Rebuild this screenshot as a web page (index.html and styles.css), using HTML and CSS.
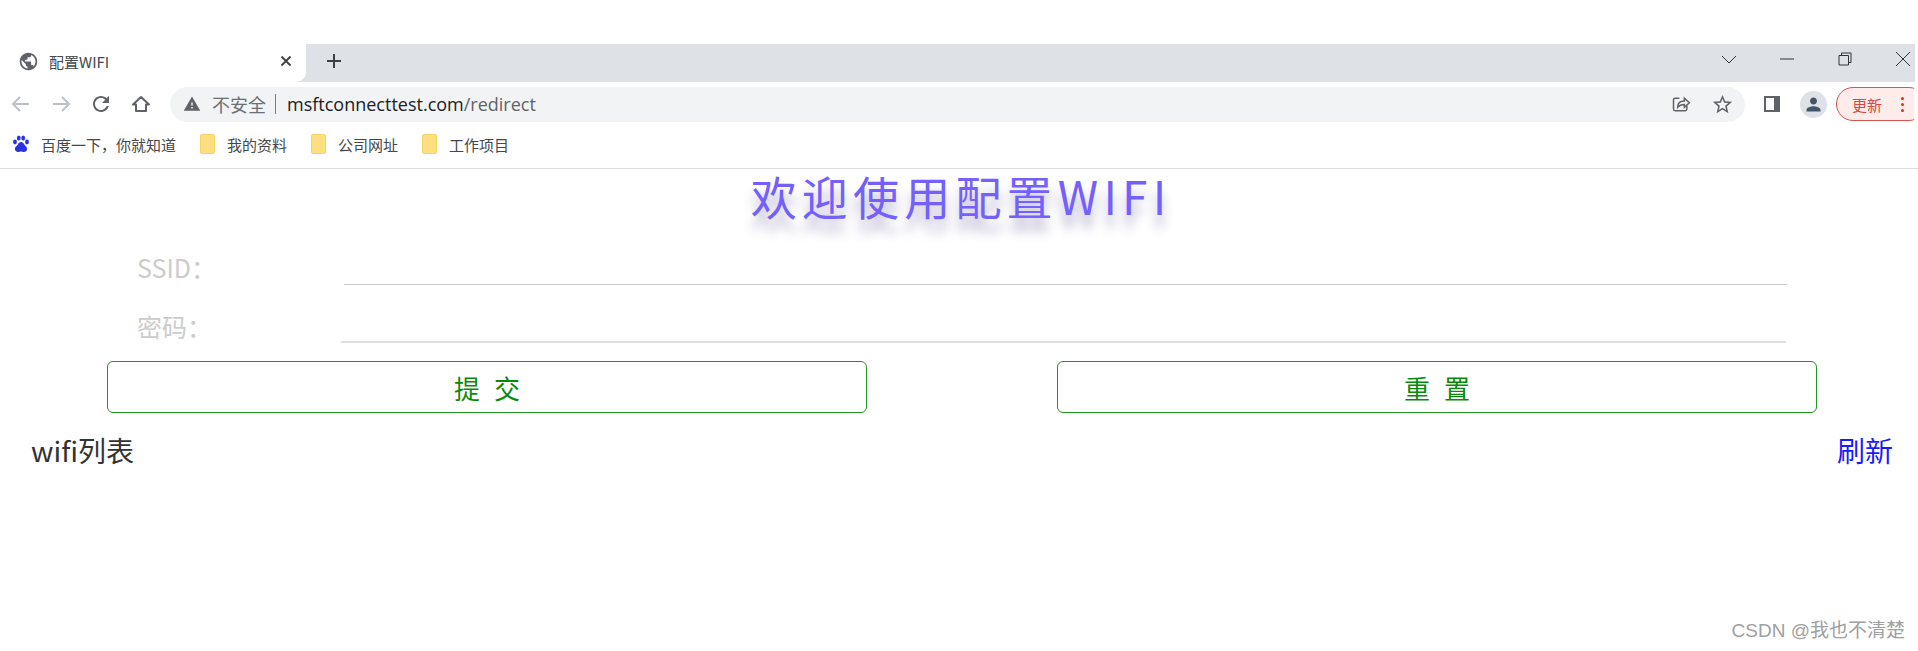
FILE: index.html
```html
<!DOCTYPE html>
<html lang="zh-CN">
<head>
    <meta charset="UTF-8">
    <meta name="viewport" content="width=device-width, initial-scale=1.0">
    <title>配置WIFI</title>
    <link rel="stylesheet" href="styles.css">
</head>
<body>
    <div class="browser">
        <div class="tab-strip">
            <div class="tab">
                <svg class="favicon" viewBox="0 0 24 24"><path d="M12 2C6.48 2 2 6.48 2 12s4.48 10 10 10 10-4.48 10-10S17.52 2 12 2zm-1 17.93c-3.95-.49-7-3.85-7-7.93 0-.62.08-1.21.21-1.79L9 15v1c0 1.1.9 2 2 2v1.93zm6.9-2.54c-.26-.81-1-1.39-1.9-1.39h-1v-3c0-.55-.45-1-1-1H8v-2h2c.55 0 1-.45 1-1V7h2c1.1 0 2-.9 2-2v-.41c2.93 1.19 5 4.06 5 7.41 0 2.08-.8 3.97-2.1 5.39z"/></svg>
                <span class="tab-title">配置WIFI</span>
                <svg class="tab-close" viewBox="0 0 12 12"><path d="M1.5 1.5l9 9M10.5 1.5l-9 9"/></svg>
            </div>
            <svg class="new-tab" viewBox="0 0 16 16"><path d="M8 1v14M1 8h14"/></svg>
            <div class="window-buttons">
                <svg class="win-icon" viewBox="0 0 14 14"><path d="M0 4l7 7 7-7"/></svg>
                <svg class="win-icon" viewBox="0 0 14 14"><path d="M0 7h14"/></svg>
                <svg class="win-icon" viewBox="0 0 14 14"><path d="M1 3.5h9.5V13H1zM3.5 3.5V1H13v9.5h-2.5"/></svg>
                <svg class="win-icon" viewBox="0 0 14 14"><path d="M0 0l14 14M14 0L0 14"/></svg>
            </div>
        </div>

        <div class="toolbar">
            <div class="nav-buttons">
                <svg class="nav-icon disabled" viewBox="0 0 24 24"><path d="M20 12H5M11 5l-7 7 7 7"/></svg>
                <svg class="nav-icon disabled" viewBox="0 0 24 24"><path d="M4 12h15M13 5l7 7-7 7"/></svg>
                <svg class="nav-fill" viewBox="0 0 24 24"><path d="M17.65 6.35C16.2 4.9 14.21 4 12 4c-4.42 0-7.99 3.58-7.99 8s3.57 8 7.99 8c3.73 0 6.84-2.55 7.73-6h-2.08c-.82 2.33-3.04 4-5.65 4-3.31 0-6-2.69-6-6s2.69-6 6-6c1.66 0 3.14.69 4.22 1.78L13 11h7V4l-2.35 2.35z"/></svg>
                <svg class="nav-icon home" viewBox="0 0 24 24"><path d="M12 5l-8 7.500h3V19h10v-6.500h3z"/></svg>
            </div>
            <div class="omnibox">
                <svg class="warn-icon" viewBox="0 0 24 24"><path d="M1 21h22L12 2 1 21zm12-3h-2v-2h2v2zm0-4h-2v-4h2v4z"/></svg>
                <span class="not-secure">不安全</span>
                <span class="sep"></span>
                <span class="url">msftconnecttest.com<span class="url-path">/redirect</span></span>
                <svg class="omni-icon share" viewBox="0 0 24 24"><path d="M10 5H5a2 2 0 0 0-2 2v11a2 2 0 0 0 2 2h12a2 2 0 0 0 2-2v-4M8 16c0-5 3-7.500 8-7.500V5l6 5.500-6 5.500v-3.500c-3 0-6 1-8 3.500z"/></svg>
                <svg class="omni-star" viewBox="0 0 24 24"><path d="M22 9.240l-7.190-.62L12 2 9.190 8.630 2 9.240l5.460 4.730L5.820 21 12 17.270 18.180 21l-1.630-7.030L22 9.240zM12 15.400l-3.760 2.270 1-4.280-3.320-2.880 4.380-.38L12 6.100l1.710 4.040 4.380.38-3.320 2.880 1 4.280L12 15.400z"/></svg>
            </div>
            <div class="side-panel"></div>
            <div class="avatar">
                <svg viewBox="0 0 24 24"><path d="M12 12c2.210 0 4-1.790 4-4s-1.790-4-4-4-4 1.790-4 4 1.790 4 4 4zm0 2c-2.670 0-8 1.340-8 4v2h16v-2c0-2.660-5.330-4-8-4z"/></svg>
            </div>
            <div class="update-pill">
                <span>更新</span>
                <span class="update-dots"><i></i><i></i><i></i></span>
            </div>
        </div>

        <div class="bookmarks">
            <div class="bookmark">
                <svg class="baidu" viewBox="0 0 18 18">
                    <ellipse cx="3" cy="7" rx="1.900" ry="2.400"/>
                    <ellipse cx="6.800" cy="3" rx="1.900" ry="2.500"/>
                    <ellipse cx="11.200" cy="3" rx="1.900" ry="2.500"/>
                    <ellipse cx="15" cy="7" rx="1.900" ry="2.400"/>
                    <path d="M9 7c-2.500 0-3 3-5 4.500S3 17 6 17c1.500 0 2-.5 3-.5s1.500.5 3 .5c3 0 4-3.500 2-5.500S11.500 7 9 7z"/>
                </svg>
                <span>百度一下，你就知道</span>
            </div>
            <div class="bookmark folder-mark"><span class="folder"></span><span>我的资料</span></div>
            <div class="bookmark folder-mark"><span class="folder"></span><span>公司网址</span></div>
            <div class="bookmark folder-mark"><span class="folder"></span><span>工作项目</span></div>
        </div>
    </div>

    <div class="page">
        <h1 class="page-title">欢迎使用配置WIFI</h1>
        <form class="wifi-form">
            <div class="form-row">
                <label class="form-label">SSID：</label>
                <input class="form-input" type="text">
            </div>
            <div class="form-row second">
                <label class="form-label">密码：</label>
                <input class="form-input" type="password">
            </div>
            <div class="form-buttons">
                <button class="form-btn" type="button">提 交</button>
                <button class="form-btn" type="reset">重 置</button>
            </div>
        </form>
        <div class="list-head">
            <span class="list-title">wifi列表</span>
            <a class="refresh" href="#">刷新</a>
        </div>
    </div>

    <div class="watermark">CSDN @我也不清楚</div>
</body>
</html>
```
FILE: styles.css
```css
html, body {
    height: 100%;
}
body {
    position: relative;
    margin: 0;
    overflow: hidden;
    background-color: #fff;
    font-family: "Open Sans", "Noto Sans CJK SC", sans-serif;
    color: #333;
}
svg {
    display: block;
    flex: none;
}

/* browser chrome */
.browser {
    padding-top: 44px;
    border-bottom: 1px solid #dcdcdc;
}
.tab-strip {
    display: flex;
    align-items: center;
    height: 38px;
    margin-left: 3px;
    margin-right: 3px;
    background-color: #dee1e6;
}
.tab {
    display: flex;
    align-items: center;
    width: 303px;
    height: 100%;
    box-sizing: border-box;
    padding: 0 14px 4px 15px;
    background-color: #fff;
    border-bottom-right-radius: 10px;
    font-family: "Noto Sans CJK SC", sans-serif;
}
.favicon {
    width: 21px;
    height: 21px;
    fill: #5f6368;
}
.tab-title {
    flex: 1;
    margin-left: 10px;
    font-size: 15px;
    color: #45474a;
}
.tab-close {
    width: 12px;
    height: 12px;
    fill: none;
    stroke: #3c4043;
    stroke-width: 1.800;
}
.new-tab {
    width: 16px;
    height: 16px;
    margin-left: 20px;
    margin-bottom: 4px;
    fill: none;
    stroke: #3c4043;
    stroke-width: 2;
}
.window-buttons {
    display: flex;
    align-items: center;
    gap: 44px;
    margin-left: auto;
    margin-right: 5px;
    margin-bottom: 8px;
}
.win-icon {
    width: 14px;
    height: 14px;
    fill: none;
    stroke: #333;
    stroke-width: 1;
}

.toolbar {
    display: flex;
    align-items: center;
    height: 44px;
    margin-right: 4px;
    padding-left: 9px;
    overflow: hidden;
}
.nav-buttons {
    display: flex;
    align-items: center;
    flex: none;
    gap: 16px;
    width: 161px;
}
.nav-icon {
    width: 24px;
    height: 24px;
    fill: none;
    stroke: #5f6368;
    stroke-width: 2;
}
.nav-icon.disabled {
    stroke: #bdc1c6;
}
.nav-icon.home {
    stroke-width: 2;
    stroke-linejoin: round;
}
.nav-fill {
    width: 24px;
    height: 24px;
    fill: #5f6368;
}
.omnibox {
    display: flex;
    align-items: center;
    flex: none;
    width: 1575px;
    height: 35px;
    box-sizing: border-box;
    padding: 0 11px 0 13px;
    background-color: #f1f3f4;
    border-radius: 18px;
    font-size: 18px;
}
.warn-icon {
    width: 18px;
    height: 18px;
    fill: #5f6368;
}
.not-secure {
    margin-left: 11px;
    font-family: "Noto Sans CJK SC", sans-serif;
    font-size: 18px;
    color: #6c6f73;
}
.sep {
    width: 1px;
    height: 20px;
    margin: 0 11px 0 9px;
    background-color: #7a7d80;
}
.url {
    flex: 1;
    color: #202124;
}
.url-path {
    color: #5f6368;
}
.omni-icon {
    width: 20px;
    height: 20px;
    fill: none;
    stroke: #5f6368;
    stroke-width: 1.800;
}
.omni-star {
    width: 23px;
    height: 23px;
    margin-left: 20px;
    fill: #5f6368;
}
.side-panel {
    flex: none;
    width: 16px;
    height: 16px;
    margin-left: 19px;
    box-sizing: border-box;
    border: 2px solid #5f6368;
    border-right-width: 6px;
    background-color: #fff;
}
.avatar {
    display: flex;
    align-items: center;
    justify-content: center;
    flex: none;
    width: 27px;
    height: 27px;
    margin-left: 20px;
    background-color: #dee1e6;
    border-radius: 50%;
}
.avatar svg {
    width: 21px;
    height: 21px;
    fill: #44546a;
}
.update-pill {
    display: flex;
    align-items: center;
    justify-content: space-between;
    flex: none;
    width: 90px;
    height: 34px;
    margin-left: 9px;
    box-sizing: border-box;
    padding: 0 21px 0 15px;
    background-color: #fdecea;
    border: 1.5px solid #d9534f;
    border-radius: 17px;
    font-family: "Noto Sans CJK SC", sans-serif;
    font-size: 15px;
    color: #d9483f;
}
.update-dots {
    display: flex;
    flex-direction: column;
    gap: 3px;
}
.update-dots i {
    width: 3px;
    height: 3px;
    background-color: #d93025;
    border-radius: 50%;
}

.bookmarks {
    display: flex;
    align-items: center;
    height: 42px;
    padding-bottom: 6px;
    box-sizing: border-box;
    padding-left: 12px;
    font-family: "Noto Sans CJK SC", sans-serif;
    font-size: 15px;
    color: #45474a;
}
.bookmark {
    display: flex;
    align-items: center;
}
.baidu {
    width: 18px;
    height: 18px;
    margin-right: 11px;
    fill: #2932e1;
}
.folder-mark {
    margin-left: 24px;
}
.folder {
    width: 15px;
    height: 20px;
    margin-right: 12px;
    background-color: #fddf7f;
    border: 1px solid #f6d365;
    box-sizing: border-box;
    border-radius: 2px;
}

/* page content */
.page-title {
    margin: 0;
    height: 52px;
    padding-left: 4px;
    text-align: center;
    font-family: "Noto Sans CJK SC", sans-serif;
    font-size: 46px;
    line-height: 52px;
    font-weight: 400;
    letter-spacing: 5.200px;
    color: #7360ff;
    text-shadow: 0 13px 11px rgba(70, 60, 130, 0.38);
}
.wifi-form {
    margin-top: 19px;
}
.form-row {
    display: flex;
    align-items: flex-end;
    height: 45px;
    padding-left: 137px;
}
.form-row.second {
    margin-top: 13px;
}
.form-label {
    width: 207px;
    font-family: "Noto Sans CJK SC", sans-serif;
    font-size: 25px;
    line-height: 36px;
    color: #ccc;
}
.form-input {
    width: 1443px;
    height: 40px;
    padding: 0;
    box-sizing: border-box;
    border: 0;
    border-bottom: 1px solid #ccc;
    outline: none;
    background: transparent;
}
.second .form-label {
    width: 204px;
    margin-bottom: -1px;
}
.second .form-input {
    width: 1445px;
    border-bottom: 2px solid #e0e0e0;
}
.form-buttons {
    display: flex;
    justify-content: space-between;
    width: 1710px;
    margin: 18px 0 0 107px;
}
.form-btn {
    width: 760px;
    height: 52px;
    padding: 0 0 0 4px;
    background-color: #fff;
    border: 1px solid #1f961f;
    border-radius: 6px;
    font-family: "Noto Sans CJK SC", sans-serif;
    font-size: 26px;
    letter-spacing: 4px;
    color: #0a8a0a;
}
.list-head {
    display: flex;
    justify-content: space-between;
    align-items: center;
    margin-top: 16px;
    padding: 0 25px 0 31px;
    font-family: "Noto Sans CJK SC", sans-serif;
    font-size: 28px;
    line-height: 42px;
}
.list-title {
    color: #333;
}
.refresh {
    color: #1a1aff;
    text-decoration: none;
}
.watermark {
    position: absolute;
    right: 13px;
    bottom: 9px;
    font-family: "Liberation Sans", "Noto Sans CJK SC", sans-serif;
    font-size: 19px;
    color: #a0a0a0;
}
```
